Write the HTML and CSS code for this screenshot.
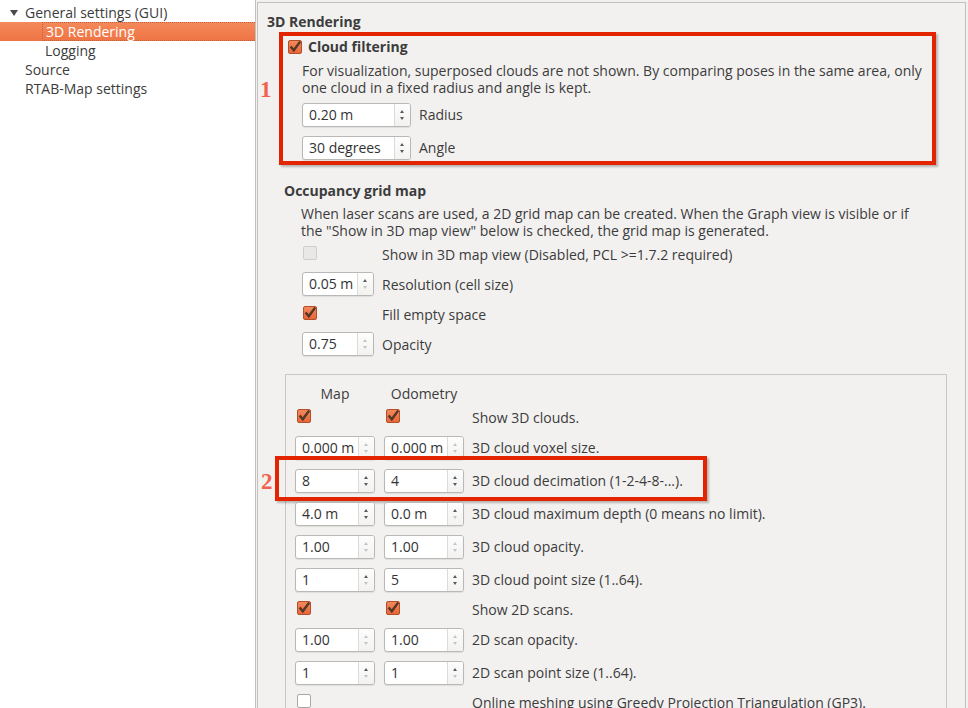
FILE: index.html
```html
<!DOCTYPE html>
<html lang="en">
<head>
    <meta charset="UTF-8">
    <title>Preferences</title>
    <link rel="stylesheet" href="styles.css">
</head>
<body>
<div class="window">

    <!-- Tree of pages -->
    <ul class="tree">
        <li class="node"><span class="arrow"></span>General settings (GUI)</li>
        <li class="node child selected"><span class="focus">3D Rendering</span></li>
        <li class="node child">Logging</li>
        <li class="node">Source</li>
        <li class="node">RTAB-Map settings</li>
    </ul>

    <!-- Page -->
    <div class="page">
        <div class="title">3D Rendering</div>

        <div class="cloud">
            <div class="annot annot-1"></div>
            <div class="mark mark-1">1</div>
            <div class="check-row">
                <span class="check on"></span>
                <span class="bold">Cloud filtering</span>
            </div>
            <div class="cloud-body">
                <p class="desc">For visualization, superposed clouds are not shown. By comparing poses in the same area, only<br>one cloud in a fixed radius and angle is kept.</p>
                <div class="row row-33">
                    <div class="spin w109"><span class="val">0.20 m</span><span class="arrows"></span></div>
                    <span class="lbl">Radius</span>
                </div>
                <div class="row row-33">
                    <div class="spin w109"><span class="val">30 degrees</span><span class="arrows"></span></div>
                    <span class="lbl">Angle</span>
                </div>
            </div>
        </div>

        <div class="grid-map">
            <div class="bold">Occupancy grid map</div>
            <p class="desc desc-2">When laser scans are used, a 2D grid map can be created. When the Graph view is visible or if<br>the "Show in 3D map view" below is checked, the grid map is generated.</p>
            <div class="opts">
                <div class="row row-30">
                    <div class="cell"><span class="check off"></span></div>
                    <span class="lbl">Show in 3D map view (Disabled, PCL &gt;=1.7.2 required)</span>
                </div>
                <div class="row row-30">
                    <div class="cell"><div class="spin w72"><span class="val">0.05 m</span><span class="arrows lo"></span></div></div>
                    <span class="lbl">Resolution (cell size)</span>
                </div>
                <div class="row row-30">
                    <div class="cell"><span class="check on"></span></div>
                    <span class="lbl">Fill empty space</span>
                </div>
                <div class="row row-30">
                    <div class="cell"><div class="spin w72"><span class="val">0.75</span><span class="arrows dim"></span></div></div>
                    <span class="lbl">Opacity</span>
                </div>
            </div>
        </div>

        <div class="box">
            <div class="row head">
                <div class="col">Map</div>
                <div class="col col-2">Odometry</div>
            </div>
            <div class="row chk">
                <div class="col"><span class="check on"></span></div>
                <div class="col col-2"><span class="check on"></span></div>
                <span class="lbl">Show 3D clouds.</span>
            </div>
            <div class="row sp">
                <div class="col"><div class="spin"><span class="val">0.000 m</span><span class="arrows dim"></span></div></div>
                <div class="col col-2"><div class="spin"><span class="val">0.000 m</span><span class="arrows dim"></span></div></div>
                <span class="lbl">3D cloud voxel size.</span>
            </div>
            <div class="row sp">
                <div class="annot annot-2"></div>
                <div class="mark mark-2">2</div>
                <div class="col"><div class="spin"><span class="val">8</span><span class="arrows"></span></div></div>
                <div class="col col-2"><div class="spin"><span class="val">4</span><span class="arrows"></span></div></div>
                <span class="lbl">3D cloud decimation (1-2-4-8-...).</span>
            </div>
            <div class="row sp">
                <div class="col"><div class="spin"><span class="val">4.0 m</span><span class="arrows"></span></div></div>
                <div class="col col-2"><div class="spin"><span class="val">0.0 m</span><span class="arrows lo"></span></div></div>
                <span class="lbl">3D cloud maximum depth (0 means no limit).</span>
            </div>
            <div class="row sp">
                <div class="col"><div class="spin"><span class="val">1.00</span><span class="arrows dim"></span></div></div>
                <div class="col col-2"><div class="spin"><span class="val">1.00</span><span class="arrows dim"></span></div></div>
                <span class="lbl">3D cloud opacity.</span>
            </div>
            <div class="row sp">
                <div class="col"><div class="spin"><span class="val">1</span><span class="arrows lo"></span></div></div>
                <div class="col col-2"><div class="spin"><span class="val">5</span><span class="arrows"></span></div></div>
                <span class="lbl">3D cloud point size (1..64).</span>
            </div>
            <div class="row chk chk-2">
                <div class="col"><span class="check on"></span></div>
                <div class="col col-2"><span class="check on"></span></div>
                <span class="lbl">Show 2D scans.</span>
            </div>
            <div class="row sp">
                <div class="col"><div class="spin"><span class="val">1.00</span><span class="arrows dim"></span></div></div>
                <div class="col col-2"><div class="spin"><span class="val">1.00</span><span class="arrows dim"></span></div></div>
                <span class="lbl">2D scan opacity.</span>
            </div>
            <div class="row sp">
                <div class="col"><div class="spin"><span class="val">1</span><span class="arrows lo"></span></div></div>
                <div class="col col-2"><div class="spin"><span class="val">1</span><span class="arrows lo"></span></div></div>
                <span class="lbl">2D scan point size (1..64).</span>
            </div>
            <div class="row chk">
                <div class="col"><span class="check"></span></div>
                <div class="col col-2"></div>
                <span class="lbl">Online meshing using Greedy Projection Triangulation (GP3).</span>
            </div>
        </div>
    </div>
</div>
</body>
</html>
```

FILE: styles.css
```css
/* BASE */
html, body {
    margin: 0;
    height: 100%;
    overflow: hidden;
}

body {
    background-color: #f2f1f0;
    color: #3c3c3c;
    font-family: "Open Sans", sans-serif;
    font-size: 14px;
    line-height: 17px;
}

.window {
    display: flex;
    height: 708px;
}

/* TREE */
.tree {
    list-style: none;
    margin: 0;
    padding: 3px 0 0;
    width: 255px;
    flex: none;
    background: #fff;
    border-right: 1px solid #c2c1be;
}

.node {
    position: relative;
    height: 19px;
    line-height: 19px;
    padding-left: 25px;
    white-space: nowrap;
}

.node.child {
    padding-left: 45px;
}

.arrow {
    position: absolute;
    left: 10px;
    top: 7px;
    border-left: 4px solid transparent;
    border-right: 4px solid transparent;
    border-top: 6px solid #4a4a4a;
}

.selected {
    padding-left: 42px !important;
    background: linear-gradient(#f4895b, #ef7444);
    color: #fff;
}

.focus {
    display: block;
    height: 17px;
    line-height: 17px;
    padding-left: 3px;
    border: 1px dotted #b8643e;
    border-right: none;
}

/* PAGE */
.page {
    flex: 1;
    margin: 2px 2px 0 1px;
    padding: 10px 0 0 9px;
    border: 1px solid #c2c1be;
    border-bottom: none;
}

.title, .bold {
    font-weight: bold;
}

.desc {
    margin: 0;
    white-space: nowrap;
}

/* cloud filtering */
.cloud {
    position: relative;
    margin: 8px 0 0 21px;
}

.check-row {
    display: flex;
    align-items: center;
    gap: 6px;
    height: 17px;
}

.cloud-body {
    padding: 7px 0 0 14px;
}

.cloud-body .desc {
    margin-bottom: 2px;
}

/* annotations drawn over the screenshot */
.annot {
    position: absolute;
    border: 4px solid #e32400;
    box-shadow: 2px 2px 2px rgba(0, 0, 0, 0.25);
    pointer-events: none;
}

.annot-1 {
    left: -9px;
    top: -6px;
    width: 649px;
    height: 125px;
}

.annot-2 {
    left: -20px;
    top: -8px;
    width: 424px;
    height: 37px;
}

.mark {
    position: absolute;
    color: #f2614c;
    font-family: "Liberation Serif", serif;
    font-weight: bold;
    font-size: 23px;
    line-height: 23px;
}

.mark-1 {
    left: -28px;
    top: 40px;
}

.mark-2 {
    left: -34px;
    top: 6px;
}

/* rows */
.row {
    position: relative;
    display: flex;
    align-items: center;
    white-space: nowrap;
}

.row-33 { height: 33px; }
.row-30 { height: 30px; }

.lbl {
    margin-left: 8px;
}

/* occupancy */
.grid-map {
    margin: 18px 0 0 17px;
}

.desc-2 {
    margin: 6px 0 0 17px;
}

.opts {
    padding-left: 18px;
}

.cell {
    width: 72px;
}

.cell .check {
    margin-left: 1px;
}

/* group box */
.box {
    margin: 15px 18px 0 18px;
    padding: 8px 0 0 9px;
    border: 1px solid #c8c7c4;
    border-bottom: none;
    height: 340px;
}

.box .col {
    width: 80px;
    margin-right: 9px;
}

.box .col-2 {
    margin-right: 0;
}

.box .lbl {
    margin-left: 8px;
}

.head {
    height: 21px;
}

.head .col {
    text-align: center;
}

.chk { height: 27px; }
.sp { height: 33px; }

.chk .check {
    margin-left: 2px;
}

/* CHECKBOX */
.check {
    display: inline-block;
    box-sizing: border-box;
    width: 14px;
    height: 14px;
    border: 1px solid #a9a8a5;
    border-radius: 2px;
    background: #fff;
    flex: none;
}

.check.on {
    border-color: #b44e27;
    background-color: #ec6e40;
    background-image: url("data:image/svg+xml,%3Csvg xmlns='http://www.w3.org/2000/svg' viewBox='0 0 14 14'%3E%3Cpath d='M2.6 6.4 L5.8 10.2 L12.2 1.6' fill='none' stroke='%23553627' stroke-width='2.4'/%3E%3C/svg%3E"), linear-gradient(#f2895c, #e7683a);
    background-size: 14px 14px, auto;
    background-position: -1px -1px, 0 0;
    background-repeat: no-repeat;
}

.check.off {
    border-color: #cfcecb;
    background: #e9e8e6;
}

/* SPINBOX */
.spin {
    display: flex;
    box-sizing: border-box;
    width: 80px;
    height: 24px;
    background: #fff;
    border: 1px solid #b9b8b5;
    border-radius: 3px;
    box-shadow: 0 1px 1px rgba(0, 0, 0, 0.08);
}

.w109 { width: 109px; }
.w72 { width: 72px; }

.val {
    flex: 1;
    padding-left: 6px;
    line-height: 22px;
    color: #333;
}

.arrows {
    position: relative;
    width: 15px;
    border-left: 1px solid #dcdbd8;
    background: linear-gradient(#fdfdfd, #f3f2f1);
    border-radius: 0 2px 2px 0;
}

.arrows::before, .arrows::after {
    content: "";
    position: absolute;
    left: 5px;
    border-left: 2.5px solid transparent;
    border-right: 2.5px solid transparent;
}

.arrows::before {
    top: 6px;
    border-bottom: 3px solid #5a5a5a;
}

.arrows::after {
    top: 13px;
    border-top: 3px solid #5a5a5a;
}

.arrows.lo::after,
.arrows.dim::after {
    border-top-color: #c4c4c4;
}

.arrows.dim::before {
    border-bottom-color: #c4c4c4;
}
```
